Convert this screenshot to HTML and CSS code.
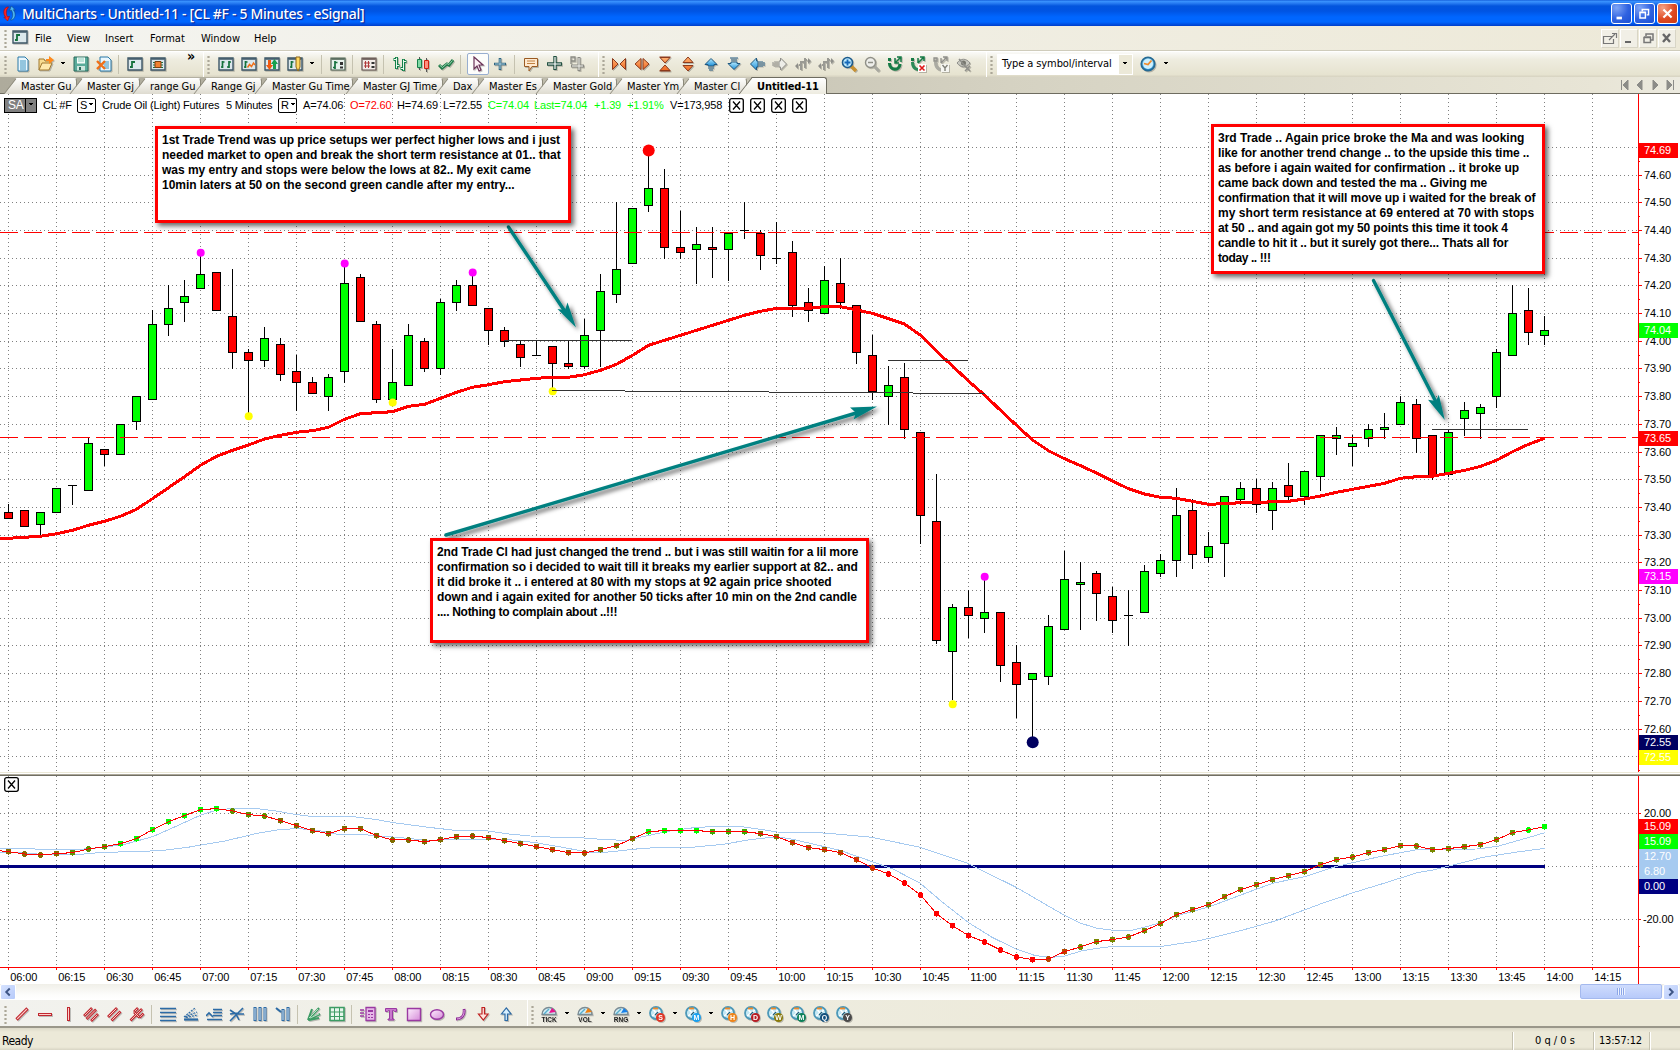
FILE: index.html
```html
<!DOCTYPE html>
<html lang="en">
<head>
<meta charset="utf-8">
<title>MultiCharts - Untitled-11</title>
<link rel="stylesheet" href="styles.css">
</head>
<body>
<svg class="defs" width="0" height="0">
<defs>
<linearGradient id="gb" x1="0" y1="0" x2="0" y2="1"><stop offset="0" stop-color="#b8ecff"/><stop offset="1" stop-color="#1d8fd8"/></linearGradient>
<linearGradient id="go" x1="0" y1="0" x2="0" y2="1"><stop offset="0" stop-color="#ffb070"/><stop offset="1" stop-color="#ee6a24"/></linearGradient>
<linearGradient id="gp" x1="0" y1="0" x2="1" y2="1"><stop offset="0" stop-color="#fdeefd"/><stop offset="1" stop-color="#d58bd8"/></linearGradient>
</defs>
<symbol id="app" viewBox="0 0 16 16"><path d="M6 1C1 2 1 9 4 12L2 12l4 4 2-5-2 .6C4 9 4 4 7 1z" fill="#f22" stroke="#a00" stroke-width=".6"/><path d="M10 15c5-1 5-8 2-11l2 0-4-4-2 5 2-.6c2 3 2 8-1 10.600z" fill="#4db8f4" stroke="#147" stroke-width=".6"/></symbol>
<symbol id="win" viewBox="0 0 16 16"><path d="M1 2h14v12H1z" fill="#dce8ec" stroke="#3c5666" stroke-width="1.400"/><path d="M1.500 3h13" stroke="#3c5666" stroke-width="1.500"/><path d="M5 5v7M5 11H3M5 6h3" stroke="#14713c" stroke-width="1.800" fill="none"/></symbol>
<symbol id="doc" viewBox="0 0 16 16"><path d="M3 1h7l3 3v11H3z" fill="#eaf7fd" stroke="#2878a8"/><path d="M5 5h6M5 7h6M5 9h6M5 11h6M5 13h6" stroke="#3c94c0"/></symbol>
<symbol id="open" viewBox="0 0 16 16"><path d="M1 14V3h5l1 2h5v3" fill="#f8dc90" stroke="#a07830"/><path d="M1 14l3-7h10l-3 7z" fill="#ffe9ac" stroke="#a07830"/><path d="M8 5V3h3V0l5 4-5 4V5z" fill="#ff8a1c"/></symbol>
<symbol id="save" viewBox="0 0 16 16"><path d="M1 1h14v14H1z" fill="#5aab9a" stroke="#2a6a5c"/><path d="M4 1.500h8v6H4z" fill="#f4fbf8"/><path d="M5 3h6M5 5h6" stroke="#8cb"/><path d="M4 10h8v4.500H4z" fill="#cfe6de"/><path d="M6 11h2v3H6z" fill="#2a6a5c"/></symbol>
<symbol id="docx" viewBox="0 0 16 16"><path d="M4 1h8l3 3v11H4z" fill="#eaf7fd" stroke="#2878a8"/><path d="M7 6h6M7 8h6M8 10h5M8 12h5" stroke="#3c94c0"/><path d="M1 5l8 8M9 5l-8 8" stroke="#f07018" stroke-width="2.400"/></symbol>
<symbol id="chip" viewBox="0 0 16 16"><path d="M1 2h14v12H1z" fill="#dce8ec" stroke="#3c5666" stroke-width="1.400"/><path d="M1.500 3h13" stroke="#3c5666" stroke-width="1.500"/><path d="M3 6.500h10M3 9h10M3 11.500h10" stroke="#14713c"/><path d="M5 5.500h6v6H5z" fill="#f08030" stroke="#804010"/></symbol>
<symbol id="win2" viewBox="0 0 16 16"><path d="M1 2h14v12H1z" fill="#dce8ec" stroke="#3c5666" stroke-width="1.400"/><path d="M1.500 3h13" stroke="#3c5666" stroke-width="1.500"/><path d="M4.500 5v7M4.500 11H3M4.500 6h2M11 5v7M11 11H9M11 6h2" stroke="#14713c" stroke-width="1.700" fill="none"/></symbol>
<symbol id="winw" viewBox="0 0 16 16"><path d="M1 2h14v12H1z" fill="#dce8ec" stroke="#3c5666" stroke-width="1.400"/><path d="M1.500 3h13" stroke="#3c5666" stroke-width="1.500"/><path d="M4.500 5v7M4.500 11H3M4.500 6h2" stroke="#14713c" stroke-width="1.700" fill="none"/><path d="M6.500 11.500l2-3 2 2 2-3.500 1.500 2" stroke="#f07018" stroke-width="1.500" fill="none"/></symbol>
<symbol id="wina" viewBox="0 0 16 16"><path d="M1 2h14v12H1z" fill="#dce8ec" stroke="#3c5666" stroke-width="1.400"/><path d="M1.500 3h13" stroke="#3c5666" stroke-width="1.500"/><path d="M4 4h3v5h2l-3.500 5L2 9h2z" fill="#f05a10"/><path d="M9 13h3V8h2l-3.500-5L7 8h2z" fill="#18a050"/></symbol>
<symbol id="winp" viewBox="0 0 16 16"><path d="M1 2h14v12H1z" fill="#dce8ec" stroke="#3c5666" stroke-width="1.400"/><path d="M1.500 3h13" stroke="#3c5666" stroke-width="1.500"/><path d="M4.500 5v7M4.500 11H3M4.500 6h2" stroke="#14713c" stroke-width="1.700" fill="none"/><path d="M9 1h4v10l-2 4-2-4z" fill="#ffd860" stroke="#8a6418"/></symbol>
<symbol id="form" viewBox="0 0 16 16"><path d="M1 2h14v12H1z" fill="#e8f2ec" stroke="#4c6050" stroke-width="1.200"/><path d="M1.500 3h13" stroke="#4c6050" stroke-width="1.600"/><path d="M5 5v8M5 11.500H3M5 6.500h2.500" stroke="#14713c" stroke-width="1.700" fill="none"/><path d="M10 6h3v3h-3zM10 10.500h3v2h-3z" fill="#333"/></symbol>
<symbol id="formr" viewBox="0 0 16 16"><path d="M1 2h14v12H1z" fill="#f2ece8" stroke="#60504c" stroke-width="1.200"/><path d="M1.500 3h13" stroke="#60504c" stroke-width="1.600"/><path d="M3 7h6M3 10h6M4.500 5v7M7.500 5v7" stroke="#b03a3a"/><path d="M10.500 6h3v2h-3zM10.500 10h3v2h-3z" fill="#333"/></symbol>
<symbol id="bars" viewBox="0 0 16 16"><path d="M4.500 1v12M1.500 3.500h3M4.500 9.500h3M11.500 3v12M8.500 12.500h3M11.500 5.500h3" fill="none" stroke="#14804a" stroke-width="3"/><path d="M4.500 1.800v10.400M2 3.500h2M5 9.500h2M11.500 3.800v10.400M9 12.500h2M12 5.500h2" fill="none" stroke="#e4f8ec"/></symbol>
<symbol id="cands" viewBox="0 0 16 16"><path d="M4.500 1v13M11.500 2v14" stroke="#555"/><path d="M2.500 3.500h4v8h-4z" fill="#7fd8a4" stroke="#14804a"/><path d="M9.500 4.500h4v8h-4z" fill="#ff9080" stroke="#d02010"/></symbol>
<symbol id="chk" viewBox="0 0 16 16"><path d="M1 9l3 3 5-4 2 1 4-5" fill="none" stroke="#1f7a48" stroke-width="3"/><path d="M1.500 9l3 2.500 4.500-4 2 1 3.500-4" fill="none" stroke="#a8dcbc" stroke-width=".9"/></symbol>
<symbol id="cur" viewBox="0 0 16 16"><path d="M4 1v12l3-3 2 5 2-1-2-5h4z" fill="#fdf0f6" stroke="#6b3358" stroke-width="1.200"/></symbol>
<symbol id="cross" viewBox="0 0 16 16"><path d="M8 2v12M2 8h12" stroke="#2c6480" stroke-width="2.600"/><path d="M8 3v10M3 8h10" stroke="#c8e4f0" stroke-width=".8"/></symbol>
<symbol id="note" viewBox="0 0 16 16"><path d="M1.500 2.500h13v8H9L6 15v-4.500H1.500z" fill="#ffe9cf" stroke="#9a5a22"/><path d="M4 5h8M4 7.500h8" stroke="#c08040"/></symbol>
<symbol id="cross2" viewBox="0 0 16 16"><path d="M9 0v14M1 8h15" stroke="#205040" stroke-width="3.400"/><path d="M9 1v12M2 8h13" stroke="#fff" stroke-width="1.200"/></symbol>
<symbol id="crossg" viewBox="0 0 16 16"><path d="M10 1v14M2 10h13" stroke="#8a8a84" stroke-width="3"/><path d="M10 2v12M3 10h11" stroke="#f4f4ee"/><path d="M2 8V1h4v4H2" fill="none" stroke="#8a8a84" stroke-width="1.300"/></symbol>
<symbol id="hin" viewBox="0 0 16 16"><path d="M1.500 2.500L7 8l-5.500 5.500zM14.500 2.500L9 8l5.500 5.500z" fill="url(#go)" stroke="#8c3a1c"/></symbol>
<symbol id="hout" viewBox="0 0 16 16"><path d="M7 2.500L1 8l6 5.500zM9 2.500L15 8l-6 5.500z" fill="url(#go)" stroke="#8c3a1c"/></symbol>
<symbol id="vin" viewBox="0 0 16 16"><path d="M3 1.500h10L8 7zM3 14.500h10L8 9z" fill="url(#go)" stroke="#8c3a1c"/><path d="M2.500 1h11M2.500 15h11" stroke="#8c3a1c"/></symbol>
<symbol id="vout" viewBox="0 0 16 16"><path d="M3 6.500h10L8 1zM3 9.500h10L8 15z" fill="url(#go)" stroke="#8c3a1c"/></symbol>
<symbol id="up" viewBox="0 0 16 16"><path d="M2 8.500L8 2.500l6 6h-3v1.500H5V8.500z" fill="url(#gb)" stroke="#205880"/><path d="M5 12h6M6 14h4" stroke="#205880"/></symbol>
<symbol id="dn" viewBox="0 0 16 16"><path d="M2 7.500l6 6 6-6h-3V6H5v1.500z" fill="url(#gb)" stroke="#205880"/><path d="M5 4h6M4 2h8" stroke="#205880"/></symbol>
<symbol id="lf" viewBox="0 0 16 16"><path d="M7.500 2l-6 6 6 6v-3H9V5H7.500z" fill="url(#gb)" stroke="#205880"/><path d="M11 5v6M13 5v6M15 6v4" stroke="#205880"/></symbol>
<symbol id="rt" viewBox="0 0 16 16"><path d="M8.500 2l6 6-6 6v-3H7V5h1.500z" fill="#edede8" stroke="#8f8f8a"/><path d="M5 5v6M3 5v6M1 6v4" stroke="#8f8f8a"/></symbol>
<symbol id="sp" viewBox="0 0 16 16"><path d="M6 5v9M6 9H4M10 2v10M10 4h2M6 6h4" stroke="#9a9a94" stroke-width="2" fill="none"/><path d="M0 10l3-3v6zM16 5l-3-3v6z" fill="#8f8f8a"/></symbol>
<symbol id="zin" viewBox="0 0 16 16"><path d="M10 10l5 5" stroke="#c89030" stroke-width="3.400"/><circle cx="6.500" cy="6.500" r="5" fill="#bdeaff" stroke="#1c5a8c" stroke-width="1.600"/><path d="M6.500 3.500v6M3.500 6.500h6" stroke="#1668b8" stroke-width="1.800"/></symbol>
<symbol id="zout" viewBox="0 0 16 16"><path d="M10 10l5 5" stroke="#a8a8a0" stroke-width="3"/><circle cx="6.500" cy="6.500" r="5" fill="#eeeeea" stroke="#909088" stroke-width="1.400"/><path d="M4 6.500h5" stroke="#909088" stroke-width="1.500"/></symbol>
<symbol id="mag" viewBox="0 0 16 16"><path d="M2.500 7c0 8 10 8 10.500 1" fill="none" stroke="#157a45" stroke-width="3.200"/><path d="M1 2h3v3H1z" fill="#157a45"/><path d="M8 7l6-6M10 1h4v5M8 2v5h4" fill="none" stroke="#157a45" stroke-width="1.500"/></symbol>
<symbol id="magx" viewBox="0 0 16 16"><path d="M2.500 6c0 7 5 8 7 7" fill="none" stroke="#2c8a58" stroke-width="3"/><path d="M1 2h3v3H1z" fill="#157a45"/><path d="M8 7l6-6M10 1h4v4M8 2v5" fill="none" stroke="#157a45" stroke-width="1.500"/><path d="M8 8h8v8H8z" fill="#fff"/><path d="M9.500 9.500l5 5M14.500 9.500l-5 5" stroke="#e01818" stroke-width="1.600"/></symbol>
<symbol id="magy" viewBox="0 0 16 16"><path d="M2.500 6c0 7 5 8 7 7" fill="none" stroke="#aaaaa2" stroke-width="3"/><path d="M1 2h3v3H1zM8 7l6-6M10 1h4v4M8 2v5" fill="none" stroke="#8f8f8a" stroke-width="1.300"/><path d="M8 8h8v8H8z" fill="#f6f6f2"/><path d="M9.500 9l2.500 3 2.500-3M12 12v3" fill="none" stroke="#808078" stroke-width="1.400"/></symbol>
<symbol id="eye" viewBox="0 0 16 16"><path d="M1 7c4-5 9-5 13 0-4 5-9 5-13 0z" fill="#c8c8c0" stroke="#8f8f8a"/><circle cx="7.500" cy="7" r="2.500" fill="#77776f"/><path d="M3 3l8 9M9 10l5 5M14 10l-5 5" stroke="#8f8f8a" stroke-width="1.500"/></symbol>
<symbol id="clk" viewBox="0 0 16 16"><circle cx="8" cy="8" r="6.700" fill="url(#gb)" stroke="#256a94" stroke-width="1.800"/><circle cx="8" cy="8" r="5" fill="#cdf0ff"/><path d="M4 7.500l4 1 3.500-4" stroke="#f08a2a" stroke-width="1.800" fill="none"/></symbol>
<symbol id="l1" viewBox="0 0 16 16"><path d="M2.500 13.500L13.500 2.500" stroke="#c02830" stroke-width="3.200"/><path d="M3.200 12.800L12.800 3.200" stroke="#ffd0cc" stroke-width="1.200"/></symbol>
<symbol id="l2" viewBox="0 0 16 16"><path d="M1 8.500h14" stroke="#c02830" stroke-width="3"/><path d="M2 8.500h12" stroke="#ffd0cc"/></symbol>
<symbol id="l3" viewBox="0 0 16 16"><path d="M8.500 1v14" stroke="#c02830" stroke-width="3"/><path d="M8.500 2v12" stroke="#ffd0cc"/></symbol>
<symbol id="l4" viewBox="0 0 16 16"><path d="M1 10l8-8M3.500 13L13 3.500M8 15l7-7" stroke="#c02830" stroke-width="2.600"/><path d="M1.700 9.300l6.600-6.600M4.200 12.300l8-8M8.700 14.300l5.600-5.600" stroke="#ffd0cc" stroke-width=".9"/></symbol>
<symbol id="l5" viewBox="0 0 16 16"><path d="M2 11l9-9M5.500 14.500l9-9" stroke="#c02830" stroke-width="2.800"/><path d="M2.700 10.300l7.600-7.600M6.200 13.800l7.600-7.600" stroke="#ffd0cc"/></symbol>
<symbol id="l6" viewBox="0 0 16 16"><path d="M1.500 14.500L13 3M5 6l5.500 5.500M5 6l4-4M10.500 11.500l4-4" stroke="#c02830" stroke-width="2.600" fill="none"/><path d="M2.200 13.800L12.300 3.700M5.500 6.500l4.500 4.500M5.700 5.300l2.600-2.600M11.200 10.800l2.600-2.600" stroke="#ffd0cc" stroke-width=".9"/></symbol>
<symbol id="b1" viewBox="0 0 16 16"><path d="M0 2.500h16M0 6.500h16M0 10.500h16M0 14.500h16" stroke="#2c6ba6" stroke-width="1.600"/></symbol>
<symbol id="b2" viewBox="0 0 16 16"><path d="M1 13.500h14" stroke="#2c6ba6" stroke-width="2.200"/><path d="M1 11L12 2M2 11l12-5M3 11.500L15 9" stroke="#2c6ba6" stroke-width="1.200" stroke-dasharray="2 1"/></symbol>
<symbol id="b3" viewBox="0 0 16 16"><path d="M7 3.500h9M7 6.500h9M7 9.500h9" stroke="#2c6ba6" stroke-width="1.500"/><path d="M0 10l3-3 4 4M1 13.500h15" stroke="#2c6ba6" stroke-width="1.600" fill="none"/></symbol>
<symbol id="b4" viewBox="0 0 16 16"><path d="M1 15L14 2M1 4l6 4 3 6M7 8h8M1 8l8-1" stroke="#2c6ba6" stroke-width="1.600" fill="none"/></symbol>
<symbol id="b5" viewBox="0 0 16 16"><path d="M3 1v14M8 1v14M13 1v14" stroke="#2c6ba6" stroke-width="3"/><path d="M3 2v12M8 2v12M13 2v12" stroke="#dcebf8"/></symbol>
<symbol id="b6" viewBox="0 0 16 16"><path d="M8 3v12M13 1v14" stroke="#2c6ba6" stroke-width="3"/><path d="M8 4v10M13 2v12" stroke="#dcebf8"/><path d="M1 2l5 4" stroke="#2c6ba6" stroke-width="2"/></symbol>
<symbol id="g1" viewBox="0 0 16 16"><path d="M2 14L6 3M2 14l11-12M2 14l12-6M3 14l10-2" stroke="#3c9c64" stroke-width="2"/><path d="M3 12l9-9M4 12l9-4" stroke="#d8f2e0" stroke-width=".8"/></symbol>
<symbol id="g2" viewBox="0 0 16 16"><path d="M1 1.500h14v13H1z" fill="#e6f6ec" stroke="#3c9c64" stroke-width="1.600"/><path d="M1 6h14M1 10.500h14M5.500 1v14M10.500 1v14" stroke="#3c9c64"/></symbol>
<symbol id="p1" viewBox="0 0 16 16"><path d="M6 1.500h9v13H6z" fill="#e6b8e8" stroke="#9a3aa2" stroke-width="1.300"/><path d="M8 4h5v2H8zM8 8h2v1H8zM11 8h2v1h-2zM8 11h2v1H8zM11 11h2v1h-2z" fill="#9a3aa2"/><path d="M0 4h4M0 7h4M0 10h4" stroke="#9a3aa2" stroke-width="1.300"/></symbol>
<symbol id="p2" viewBox="0 0 16 16"><path d="M2.500 2.500h11v3h-2l-1-1H9.500v8.500H11v1H5v-1h1.500V4.500h-1l-1 1h-2z" fill="#c878cc" stroke="#9a3aa2"/></symbol>
<symbol id="p3" viewBox="0 0 16 16"><path d="M1.500 2.500h13v12h-13z" fill="url(#gp)" stroke="#9a3aa2" stroke-width="1.400"/></symbol>
<symbol id="p4" viewBox="0 0 16 16"><ellipse cx="8" cy="8.500" rx="6.500" ry="4.800" fill="url(#gp)" stroke="#9a3aa2" stroke-width="1.400"/></symbol>
<symbol id="p5" viewBox="0 0 16 16"><path d="M12 3c1 6-2 10-8 10" fill="none" stroke="#8c2894" stroke-width="2.800"/><path d="M12 4c.5 5-2 8.500-7 9" fill="none" stroke="#e8b0ec"/></symbol>
<symbol id="rd" viewBox="0 0 16 16"><path d="M7 1.500h2.500V8H13l-4.700 6L3.500 8H7z" fill="#ffe4de" stroke="#c02020" stroke-width="1.200"/></symbol>
<symbol id="bu" viewBox="0 0 16 16"><path d="M7 14.500h2.500V8H13L8.300 2 3.500 8H7z" fill="#d8f0ff" stroke="#2c6ba6" stroke-width="1.200"/></symbol>
<symbol id="gauge" viewBox="0 0 16 16"><path d="M1 8.500a7 7 0 0 1 14 0z" fill="#d4eef6" stroke="#7b8c94" stroke-width="1.400"/><path d="M3 8L8 3" stroke="#58aecd" stroke-width="1.500"/></symbol>
<symbol id="clock2" viewBox="0 0 16 16"><circle cx="7" cy="7" r="6" fill="#c4e8f4" stroke="#4c98b8" stroke-width="1.800"/><path d="M4 3l6 8M3 10l8-6" stroke="#fff" stroke-width="1.500"/><path d="M4 2.500h5" stroke="#f08a2a" stroke-width="1.800"/><path d="M9 6L6 9" stroke="#20607c" stroke-width="1.200"/></symbol>
<symbol id="xb" viewBox="0 0 15 15"><rect x=".7" y=".7" width="13.600" height="13.600" rx="2" fill="#fff" stroke="#000" stroke-width="1.300"/><path d="M4 3.500l7 8M11 3.500l-7 8" stroke="#000" stroke-width="1.300"/></symbol>
</svg>

<div class="titlebar">
  <svg class="appicon"><use href="#app"/></svg>
  <span class="title">MultiCharts - Untitled-11 - [CL #F - 5 Minutes - eSignal]</span>
  <span class="wb"><svg viewBox="0 0 21 21"><path d="M5 14h6v3H5z" fill="#fff"/></svg></span>
  <span class="wb"><svg viewBox="0 0 21 21"><path d="M8 8V6h7v6h-2M5.500 9.500h6v6h-6zM5 9h7" fill="none" stroke="#fff" stroke-width="1.600"/></svg></span>
  <span class="wb close"><svg viewBox="0 0 21 21"><path d="M6 6l9 9M15 6l-9 9" stroke="#fff" stroke-width="2.400"/></svg></span>
</div>

<div class="menubar">
  <i class="grip"></i>
  <svg class="ic mi"><use href="#win"/></svg>
  <span style="width:32px">File</span><span style="width:38px">View</span><span style="width:45px">Insert</span><span style="width:51px">Format</span><span style="width:53px">Window</span><span>Help</span>
  <div class="mdi">
    <b><svg viewBox="0 0 16 16"><path d="M10 6.500H1.500v7h10V9M7 10l6-6M10 3.500h4.500V8" fill="none" stroke="#777" stroke-width="1.200"/></svg></b>
    <b><svg viewBox="0 0 16 16"><path d="M4 12h6" stroke="#666" stroke-width="2"/></svg></b>
    <b><svg viewBox="0 0 16 16"><path d="M6 6V4h7v6h-2M4 7.500h6.500v5H4zM4 7h7M6 4h7" fill="none" stroke="#777" stroke-width="1.500"/></svg></b>
    <b><svg viewBox="0 0 16 16"><path d="M4 4l7 8M11 4l-7 8" stroke="#666" stroke-width="2.400"/></svg></b>
  </div>
</div>

<div class="toolbar top">
  <div class="band b-file"><i class="grip"></i>
    <svg class="ic"><use href="#doc"/></svg><svg class="ic"><use href="#open"/></svg><i class="dd"></i><svg class="ic"><use href="#save"/></svg><svg class="ic"><use href="#docx"/></svg><i class="sep"></i><svg class="ic"><use href="#win"/></svg><svg class="ic"><use href="#chip"/></svg><span class="more">»</span>
  </div>
  <div class="band b-chart"><i class="grip"></i>
    <svg class="ic"><use href="#win2"/></svg><svg class="ic"><use href="#winw"/></svg><svg class="ic"><use href="#wina"/></svg><svg class="ic"><use href="#winp"/></svg><i class="dd"></i><i class="sep"></i><svg class="ic"><use href="#form"/></svg><i class="sep"></i><svg class="ic"><use href="#formr"/></svg><i class="sep"></i><svg class="ic"><use href="#bars"/></svg><svg class="ic"><use href="#cands"/></svg><svg class="ic"><use href="#chk"/></svg><i class="sep"></i><span class="sel"><svg class="ic"><use href="#cur"/></svg></span><svg class="ic"><use href="#cross"/></svg><i class="sep"></i><svg class="ic"><use href="#note"/></svg><svg class="ic"><use href="#cross2"/></svg><svg class="ic"><use href="#crossg"/></svg>
  </div>
  <div class="band b-zoom"><i class="grip"></i>
    <svg class="ic"><use href="#hin"/></svg><svg class="ic"><use href="#hout"/></svg><svg class="ic"><use href="#vin"/></svg><svg class="ic"><use href="#vout"/></svg><svg class="ic"><use href="#up"/></svg><svg class="ic"><use href="#dn"/></svg><svg class="ic"><use href="#lf"/></svg><svg class="ic"><use href="#rt"/></svg><svg class="ic"><use href="#sp"/></svg><svg class="ic"><use href="#sp"/></svg><svg class="ic"><use href="#zin"/></svg><svg class="ic"><use href="#zout"/></svg><svg class="ic"><use href="#mag"/></svg><svg class="ic"><use href="#magx"/></svg><svg class="ic"><use href="#magy"/></svg><svg class="ic"><use href="#eye"/></svg>
  </div>
  <div class="band b-symbol"><i class="grip"></i>
    <span class="combo">Type a symbol/interval</span><span class="combobtn"><i class="dd"></i></span><svg class="ic clk"><use href="#clk"/></svg><i class="dd"></i>
  </div>
</div>

<div class="tabs">
  <span class="tab" style="width:66px">Master Gu</span><span class="tab" style="width:63px">Master Gj</span><span class="tab" style="width:61px">range Gu</span><span class="tab" style="width:61px">Range Gj</span><span class="tab" style="width:91px">Master Gu Time</span><span class="tab" style="width:90px">Master GJ Time</span><span class="tab" style="width:36px">Dax</span><span class="tab" style="width:64px">Master Es</span><span class="tab" style="width:74px">Master Gold</span><span class="tab" style="width:67px">Master Ym</span><span class="tab" style="width:63px">Master Cl</span><span class="tab on" style="width:75px">Untitled-11</span>
  <svg class="tabnav" viewBox="0 0 56 12"><path d="M1.500 1v10M8 1v10L3 6zM22 1v10l-5-5zM33 1v10l5-5zM47 1v10l5-5zM53.500 1v10" fill="#8c8c88" stroke="#8c8c88"/></svg>
</div>

<div class="workspace">
  <svg id="chart" width="1680" height="890" viewBox="0 94 1680 890"></svg>
  <div class="quote">
    <span class="sa">SA<b><i class="dd"></i></b></span>
    <span style="width:34px">CL #F</span><span class="box" style="margin-right:6px">S<i class="dd"></i></span><span style="width:124px">Crude Oil (Light) Futures</span><span style="width:52px">5 Minutes</span><span class="box" style="margin-right:6px">R<i class="dd"></i></span><span style="width:47px">A=74.06</span><span class="red" style="width:47px">O=72.60</span><span style="width:46px">H=74.69</span><span style="width:45px">L=72.55</span><span class="green" style="width:46px">C=74.04</span><span class="green" style="width:60px">Last=74.04</span><span class="green" style="width:33px">+1.39</span><span class="green" style="width:43px">+1.91%</span><span style="width:59px">V=173,958</span><svg class="x"><use href="#xb"/></svg><svg class="x"><use href="#xb"/></svg><svg class="x"><use href="#xb"/></svg><svg class="x"><use href="#xb"/></svg>
  </div>
  <svg class="x osc"><use href="#xb"/></svg>
  <div class="note n1"><p>1st Trade Trend was up price setups wer perfect higher lows and i just</p><p>needed market to open and break the short term resistance at 01.. that</p><p>was my entry and stops were below the lows at 82.. My exit came</p><p>10min laters at 50 on the second green candle after my entry...</p></div>
  <div class="note n2"><p>2nd Trade Cl had just changed the trend .. but i was still waitin for a lil more</p><p>confirmation so i decided to wait till it breaks my earlier support at 82.. and</p><p>it did broke it .. i entered at 80 with my stops at 92 again price shooted</p><p>down and i again exited for another 50 ticks after 10 min on the 2nd candle</p><p>.... Nothing to complain about ..!!!</p></div>
  <div class="note n3"><p>3rd Trade .. Again price broke the Ma and was looking</p><p>like for another trend change .. to the upside this time ..</p><p>as before i again waited for confirmation .. it broke up</p><p>came back down and tested the ma .. Giving me</p><p>confirmation that it will move up i waited for the break of</p><p>my short term resistance at 69 entered at 70 with stops</p><p>at 50 .. and again got my 50 points this time it took 4</p><p>candle to hit it .. but it surely got there... Thats all for</p><p>today .. !!!</p></div>
</div>

<div class="scroll">
  <span class="sb"><svg viewBox="0 0 16 16"><path d="M10 4L6 8l4 4" fill="none" stroke="#3d5585" stroke-width="2.200"/></svg></span>
  <span class="thumb"><i></i></span>
  <span class="sb r"><svg viewBox="0 0 16 16"><path d="M6 4l4 4-4 4" fill="none" stroke="#3d5585" stroke-width="2.200"/></svg></span>
</div>

<div class="toolbar bottom">
  <div class="band b-draw"><i class="grip"></i>
    <svg class="ic"><use href="#l1"/></svg><svg class="ic"><use href="#l2"/></svg><svg class="ic"><use href="#l3"/></svg><svg class="ic"><use href="#l4"/></svg><svg class="ic"><use href="#l5"/></svg><svg class="ic"><use href="#l6"/></svg><i class="sep"></i><svg class="ic"><use href="#b1"/></svg><svg class="ic"><use href="#b2"/></svg><svg class="ic"><use href="#b3"/></svg><svg class="ic"><use href="#b4"/></svg><svg class="ic"><use href="#b5"/></svg><svg class="ic"><use href="#b6"/></svg><i class="sep"></i><svg class="ic"><use href="#g1"/></svg><svg class="ic"><use href="#g2"/></svg><i class="sep"></i><svg class="ic"><use href="#p1"/></svg><svg class="ic"><use href="#p2"/></svg><svg class="ic"><use href="#p3"/></svg><svg class="ic"><use href="#p4"/></svg><svg class="ic"><use href="#p5"/></svg><svg class="ic"><use href="#rd"/></svg><svg class="ic"><use href="#bu"/></svg>
  </div>
  <div class="band b-res"><i class="grip"></i>
    <svg class="ic" viewBox="0 0 16 16"><use href="#gauge"/><path d="M8 7l3-5 4 4z" fill="#e8148c"/><text x="8" y="15.500">TICK</text></svg><i class="dd"></i>
    <svg class="ic" viewBox="0 0 16 16"><use href="#gauge"/><path d="M8 7l3-5 4 4z" fill="#f08010"/><text x="8" y="15.500">VOL</text></svg><i class="dd"></i>
    <svg class="ic" viewBox="0 0 16 16"><use href="#gauge"/><path d="M8 7l3-5 4 4z" fill="#1880e8"/><text x="8" y="15.500">RNG</text></svg><i class="dd"></i>
    <svg class="ic m" viewBox="0 0 16 16"><use href="#clock2"/><circle cx="11.500" cy="11.500" r="4.500" fill="#e03424"/><text x="11.500" y="14">S</text></svg><i class="dd"></i>
    <svg class="ic m" viewBox="0 0 16 16"><use href="#clock2"/><circle cx="11.500" cy="11.500" r="4.500" fill="#18a0f0"/><text x="11.500" y="14">M</text></svg><i class="dd"></i>
    <svg class="ic m" viewBox="0 0 16 16"><use href="#clock2"/><circle cx="11.500" cy="11.500" r="4.500" fill="#f08418"/><text x="11.500" y="14">H</text></svg>
    <svg class="ic m" viewBox="0 0 16 16"><use href="#clock2"/><circle cx="11.500" cy="11.500" r="4.500" fill="#b81c24"/><text x="11.500" y="14">D</text></svg>
    <svg class="ic m" viewBox="0 0 16 16"><use href="#clock2"/><circle cx="11.500" cy="11.500" r="4.500" fill="#8a7a08"/><text x="11.500" y="14">W</text></svg>
    <svg class="ic m" viewBox="0 0 16 16"><use href="#clock2"/><circle cx="11.500" cy="11.500" r="4.500" fill="#0c8058"/><text x="11.500" y="14">M</text></svg>
    <svg class="ic m" viewBox="0 0 16 16"><use href="#clock2"/><circle cx="11.500" cy="11.500" r="4.500" fill="#14507c"/><text x="11.500" y="14">Q</text></svg>
    <svg class="ic m" viewBox="0 0 16 16"><use href="#clock2"/><circle cx="11.500" cy="11.500" r="4.500" fill="#4a4a4a"/><text x="11.500" y="14">Y</text></svg>
  </div>
</div>

<div class="status"><span class="ready">Ready</span><span class="rate">0 q / 0 s</span><span class="time">13:57:12</span><span class="end"></span></div>
<script src="chart.js"></script>
</body>
</html>
```
FILE: styles.css
```css
* { box-sizing: border-box; }
body { margin: 0; width: 1680px; height: 1050px; overflow: hidden; display: flex; flex-direction: column; background: #ece9d8; font: 11px "DejaVu Sans Condensed", "DejaVu Sans", sans-serif; color: #000; white-space: nowrap; }
.defs { position: absolute; width: 0; height: 0; }
svg { flex: none; }

.titlebar { height: 26px; flex: none; display: flex; align-items: center; padding: 0 2px 0 2px; background: linear-gradient(#0a4fd0 0, #3c96ff 1px, #2a7ff4 3px, #0355dd 6px, #0054e3 11px, #0066ff 17px, #0066ff 22px, #0048d8 25px, #003dc8 26px); }
.appicon { width: 15px; height: 17px; margin-right: 5px; }
.title { flex: 1; color: #fff; font: 500 14px "Noto Sans", sans-serif; text-shadow: 1px 1px 1px #0a1883; letter-spacing: -0.320px; }
.wb { width: 21px; height: 21px; margin-left: 2px; border: 1px solid #fff; border-radius: 3px; background: radial-gradient(circle at 25% 20%, #7fa5f6, #2f62e0 55%, #1c50d4); }
.wb svg { display: block; width: 19px; height: 19px; }
.close { background: radial-gradient(circle at 25% 20%, #f5a184, #df4a22 55%, #cc3a12); }

.menubar { height: 25px; flex: none; display: flex; align-items: center; background: linear-gradient(90deg, #f4f4f0, #ede9d8); border-bottom: 1px solid #cfccbc; padding: 0 4px 0 4px; }
.grip { width: 3px; height: 19px; flex: none; background: radial-gradient(circle, #aba798 1px, transparent 1.300px) 0 0 / 3px 4px; }
.ic { width: 16px; height: 16px; margin: 0 3.500px; overflow: visible; filter: drop-shadow(1px 1px 0.500px rgba(0,0,0,.22)); }
.menubar .mi { margin: 0 7px 2px 5px; }
.mdi { margin-left: auto; display: flex; gap: 1px; }
.mdi b { width: 18px; height: 19px; border: 1px solid #fff; border-right-color: #d8d5c6; border-bottom-color: #d8d5c6; background: #f1efe6; }
.mdi svg { display: block; width: 16px; height: 16px; }

.toolbar { display: flex; flex: none; background: linear-gradient(#fafaf8, #eeecdf 30%, #e6e3d0 90%, #d6d2c0); }
.band { display: flex; align-items: center; padding-left: 4px; border-left: 1px solid #fff; }
.top { height: 26px; border-top: 1px solid #fff; }
.top .band { padding-bottom: 1px; }
.top .grip { margin-right: 4px; }
.b-file { width: 203px; border-left: 0; }
.b-chart { width: 395px; padding-left: 3px; }
.b-zoom { width: 388px; padding-left: 3px; }
.b-zoom .grip { margin-right: 2px; }
.b-symbol { flex: 1; padding-left: 3px; }
.sep { width: 8px; height: 19px; flex: none; background: linear-gradient(90deg, transparent 3px, #c5c2b0 3px, #c5c2b0 4px, transparent 4px); }
.dd { width: 12px; height: 12px; flex: none; display: inline-block; background: conic-gradient(from -45deg at 50% 65%, #000 90deg, transparent 0) 50% 50% / 6px 4px no-repeat; }
.more { font-size: 14px; font-weight: bold; margin-left: 18px; margin-top: -16px; }
.sel { width: 22px; height: 22px; border: 1px solid #98aed0; border-radius: 2px; background: #fdfdfb; display: flex; align-items: center; justify-content: center; margin: 0 -1px 0 2px; }
.combo { width: 121px; height: 21px; line-height: 20px; background: #fff; padding-left: 5px; letter-spacing: -0.090px; }
.combobtn { width: 15px; height: 21px; border: 1px solid #fff; display: flex; align-items: center; justify-content: center; background: #ece9d8; margin-right: 0; }
.combobtn .dd { margin-left: -2px; }
.clk { margin-left: 7px; }

.tabs { height: 17px; flex: none; display: flex; padding-left: 16px; background: linear-gradient(90deg, #aeab9c, #b9b6a7 25%, #d5d2c2 60%, #e8e5d6 95%, #eceadf); border-bottom: 1px solid #6e6c60; }
.tab { position: relative; flex: none; height: 16px; padding-left: 5px; line-height: 19px; z-index: 0; letter-spacing: -0.050px; }
.tab::before, .tab::after { content: ""; position: absolute; top: 1px; height: 15px; z-index: -1; background: linear-gradient(#fdfdfb, #dedbd0); border-top: 1px solid #fff; }
.tab::before { left: 0; width: 22px; transform-origin: top; transform: skewX(-38deg); border-left: 1px solid #8d8a7c; }
.tab::after { left: 9px; right: 5px; border-right: 1px solid #8d8a7c; border-radius: 0 3px 0 0; }
.on { font-weight: bold; letter-spacing: -0.100px; }
.on::before, .on::after { background: linear-gradient(#fff, #eceade); border-color: #6e6c60; top: 0; height: 17px; }
.on::after { right: 0; }
.tabnav { width: 56px; height: 12px; margin: 2px 4px 0 auto; }

.workspace { height: 890px; flex: none; position: relative; background: #fff; font-family: "Liberation Sans", Arial, sans-serif; }
#chart { display: block; }
#chart text { font: 11px "Liberation Sans", Arial, sans-serif; letter-spacing: -0.100px; }
.quote { position: absolute; left: 4px; top: 3px; height: 16px; display: flex; align-items: center; letter-spacing: -0.150px; }
.quote > span { flex: none; }
.quote > .sa { display: flex; width: 33px; height: 15px; margin-right: 6px; border: 1px solid #000; background: #808080; color: #fff; padding-left: 3px; line-height: 13px; font-size: 12px; }
.sa b { margin-left: auto; border-left: 1px solid #000; width: 11px; display: flex; align-items: center; justify-content: center; }
.box { width: 19px; height: 15px; border: 1px solid #000; border-radius: 2px; background: #fff; padding-left: 2px; display: flex; align-items: center; }
.box .dd { width: 8px; }
.red { color: #f00; }
.green { color: #0f0; }
.x { width: 15px; height: 15px; margin-right: 6px; }
.osc { position: absolute; left: 4px; top: 683px; }
.note { position: absolute; border: 3px solid #f00; background: #fff; font-weight: bold; font-size: 12px; line-height: 15px; padding: 4px; box-shadow: 3px 3px 5px rgba(0,0,0,.6); }
.note p { margin: 0; }
.n1 { left: 155px; top: 32px; width: 416px; height: 97px; letter-spacing: -0.030px; }
.n2 { left: 430px; top: 444px; width: 439px; height: 105px; letter-spacing: -0.075px; }
.n2 p:nth-child(1) { letter-spacing: -0.110px; }
.n2 p:nth-child(5) { letter-spacing: -0.290px; }
.n3 { left: 1211px; top: 30px; width: 334px; height: 150px; letter-spacing: -0.080px; }
.n3 p:nth-child(1) { letter-spacing: 0; }
.n3 p:nth-child(6) { letter-spacing: 0.050px; }
.n3 p:nth-child(7), .n3 p:nth-child(8) { letter-spacing: -0.140px; }
.n3 p:nth-child(9) { letter-spacing: -0.400px; }

.scroll { height: 16px; flex: none; display: flex; background: linear-gradient(#f0efe8, #fdfdfc 70%, #fff); }
.sb { width: 16px; height: 16px; border: 1px solid #fff; border-radius: 2px; background: linear-gradient(135deg, #d6e2fe, #b6cafa); }
.sb svg { display: block; width: 14px; height: 14px; }
.r { margin-right: 1px; }
.thumb { width: 82px; height: 15px; margin: 0 1px 0 auto; border: 1px solid #a4b9ee; border-radius: 2px; background: linear-gradient(#cfdcfd, #b7cafa); display: flex; align-items: center; justify-content: center; }
.thumb i { width: 8px; height: 7px; background: repeating-linear-gradient(90deg, #8ba6e8 0 1px, #eef3ff 1px 2px); }

.bottom { height: 28px; border-bottom: 2px solid #9a978a; background: linear-gradient(90deg, #f2f2ee, #ece9d8 70%); }
.bottom .band { padding-top: 2px; }
.b-draw { width: 527px; border-left: 0; }
.bottom .grip { margin-right: 3px; }
.b-res { padding-left: 3px; }
.b-res .dd { width: 13px; }
.b-res text { font: bold 6.500px "Liberation Sans", sans-serif; text-anchor: middle; fill: #222; }
.b-res .m text { font-size: 7px; fill: #fff; }

.status { height: 22px; flex: none; display: flex; align-items: center; padding: 3px 0 0 2px; background: linear-gradient(#dcd9c8, #ece9d8 4px, #ece9d8 19px, #d8d5c4); }
.ready { flex: 1; font-size: 12px; letter-spacing: -0.500px; }
.status span + span { border-left: 1px solid #c5c2b0; height: 18px; line-height: 18px; box-shadow: inset 1px 0 #fff; }
.rate { width: 81px; padding-left: 22px; }
.time { width: 56px; padding-left: 5px; letter-spacing: -0.200px; }
.end { width: 31px; }
```
FILE: chart.js
```js
const svg = document.getElementById('chart');
const X = i => 8 + 16 * i;
let out = '';
const rect = (x, y, w, h, f) => { out += `<rect x="${x}" y="${y}" width="${w}" height="${h}" fill="${f}"/>`; };
const line = (x1, y1, x2, y2, c, extra = '') => { out += `<line x1="${x1}" y1="${y1}" x2="${x2}" y2="${y2}" stroke="${c}" ${extra}/>`; };
const poly = (pts, c, w) => { out += `<polyline points="${pts}" fill="none" stroke="${c}" stroke-width="${w}"/>`; };

// Grid
const priceY = [147,175,202,230,258,285,313,341,368,396,424,452,479,507,535,562,590,618,645,673,701,729,756];
out += '<g shape-rendering="crispEdges">';
const dots = 'stroke-dasharray="1 3"';
for (let k = 0; k < 34; k++) {
  line(8.5 + 48 * k, 94, 8.5 + 48 * k, 772, '#808080', dots);
  line(8.5 + 48 * k, 776, 8.5 + 48 * k, 967, '#808080', dots);
}
priceY.concat([813, 866, 919]).forEach(y => line(0, y + .5, 1638, y + .5, '#808080', dots));

// Candles: colour, high, body top, body bottom, low
const candles = `R504,512,519,519 R510,510,527,527 G512,512,525,535 G488,488,513,513 D485,485,486,505 G438,443,491,491 R449,449,455,466 G424,424,455,455 G396,396,422,430 G310,324,400,400
G285,308,325,336 G280,296,303,322 G253,274,289,289 R272,272,311,311 R269,316,353,369 R349,352,361,416 G327,338,361,367 R338,344,375,381 R355,371,383,411 R377,382,394,394
G374,377,397,411 G264,283,372,383 R274,277,322,322 R321,324,400,403 G349,382,400,403 G324,335,386,386 R338,341,369,372 G299,302,369,375 G280,285,303,311 R273,285,306,306
R308,308,331,345 R327,330,342,347 R341,344,358,367 D341,355,356,356 R346,346,364,391 R341,363,367,369 G319,335,367,369 G274,291,331,367 G202,269,295,303 G208,208,264,264
G151,188,206,212 R169,188,248,259 R211,247,253,259 G227,244,250,284 R227,247,250,278 G233,233,250,281 D202,230,231,239 R230,233,256,270 D222,258,259,264 R241,252,306,317
R288,302,311,322 G266,280,314,314 R258,283,303,309 R305,305,353,364 R335,355,392,400 G366,385,397,425 R363,377,430,439 R432,432,516,544 R474,521,641,644 G604,607,652,700
R590,607,616,638 G577,612,619,633 R612,612,666,682 R645,662,685,718 G673,673,680,740 G615,626,677,685 G551,579,630,630 G562,582,585,630 R571,573,594,621 R587,596,621,633
D590,615,616,646 G565,571,613,613 G554,560,574,577 G488,515,561,577 R499,510,555,569 G532,546,558,563 G496,496,544,577 G482,488,500,505 R479,488,505,513 G482,488,511,530
R463,485,497,502 G471,471,497,505 G435,435,477,491 G427,435,439,455 G435,443,447,466 G424,429,439,447 G413,427,430,439 G396,402,425,425 R399,404,439,453 R435,435,477,480
G430,432,475,477 G402,410,419,436 G404,407,414,439 G349,352,397,408 G285,313,356,356 R288,310,333,345 G316,330,336,345`.split(/\s+/);
candles.forEach((c, i) => {
  const [h, t, b, l] = c.slice(1).split(',').map(Number);
  if (l > h) rect(X(i), h, 1, l - h, '#000');
  rect(X(i) - 4, t, 9, b - t, '#000');
  if (c[0] !== 'D') rect(X(i) - 3, t + 1, 7, b - t - 2, c[0] === 'G' ? '#0f0' : '#f00');
});
rect(0, 865, 1545, 3, '#000080');

// Price reference lines
line(0, 232.5, 1638, 232.5, '#f00', 'stroke-dasharray="18 6"');
line(0, 437.5, 1638, 437.5, '#f00', 'stroke-dasharray="18 6"');

// Moving average
const ma = [538.3,537.3,536.3,533.7,530.3,525.3,521.3,516.3,509.3,498.7,487.7,476.7,465.3,456.3,450.3,445,439,435.3,432.3,430.7,427.3,419.3,413.7,412.7,411.7,406.3,404.3,398.3,392.3,387.3,384.7,381.7,380,378.3,377.3,377.3,374.7,370.3,364.3,355.3,345.3,340.3,335.3,330.3,325.3,320.3,315.3,311.3,308.3,308.3,308,306.7,306.7,310,313.3,318.7,324,335.3,351.3,366,381,395,410.3,425.3,440,450.7,458.7,465.7,473,481,488.7,494,497.3,498.3,501.3,504.3,503.7,502.7,502.7,501.7,501.3,499,496,492.3,489.3,486.3,483.3,478.3,476.7,476.3,473.3,470.3,466.3,460.3,451.7,444.3,438.3];
poly('0,538.5 ' + ma.map((y, i) => `${X(i) + .5},${y}`).join(' '), '#f00', 3);

// Oscillator bands
const band = (a, b) => a.map(([x, y]) => `${x / 1.8667},${760 + y / 3}`).concat(b.map(([x, y]) => `${840 + x / 1.8667},${760 + y / 3}`)).join(' ');
poly(band([[0,265],[60,266],[75,269],[150,268],[195,262],[235,252],[285,230],[330,198],[375,165],[405,150],[430,146],[480,146],[515,153],[550,163],[580,169],[660,170],[700,178],[735,188],[800,202],[850,211],[910,213],[950,222],[990,228],[1050,233],[1090,234],[1130,239],[1170,241],[1200,230],[1250,213],[1300,202],[1350,199],[1385,200],[1420,208],[1450,216],[1520,217]],
  [[0,223],[60,232],[150,262],[240,311],[330,383],[420,467],[450,490],[480,505],[510,511],[545,511],[570,501],[600,487],[630,467],[690,440],[720,422],[780,386],[810,369],[870,349],[925,320],[960,307],[1010,289],[1050,277],[1080,268],[1190,267],[1230,258],[1280,235],[1316,218]]), '#a6caf0', 1);
poly(band([[0,278],[45,278],[75,283],[150,283],[185,278],[240,275],[300,272],[350,262],[420,243],[480,220],[525,208],[560,206],[600,213],[630,223],[680,224],[740,232],[800,241],[860,238],[950,239],[1000,248],[1050,262],[1100,277],[1130,277],[1200,265],[1240,262],[1290,262],[1350,253],[1400,239],[1450,230],[1480,238]],
  [[0,271],[60,305],[100,328],[150,370],[190,425],[240,488],[285,533],[330,568],[365,587],[395,592],[420,588],[450,573],[480,565],[510,559],[600,559],[660,545],[690,535],[750,511],[810,484],[900,430],[960,397],[1015,370],[1080,337],[1110,329],[1150,313],[1200,292],[1260,277],[1316,265]]), '#a6caf0', 1);

// Oscillator line
const osc = [274,281,284,280,277,266,259,250,235,208,184,166,148,145,152,163,167,181,196,211,220,205,205,226,239,239,244,238,229,227,232,241,250,259,268,277,278,268,256,235,214,211,211,211,214,214,214,220,229,247,262,268,277,298,323,341,368,404,460,496,526,545,569,590,598,596,574,560,544,538,530,511,490,463,448,433,409,388,373,358,346,334,313,298,290,277,268,256,257,268,265,259,253,238,217,209,199].map(v => 760.3 + v / 3);
const tone = i => i < 4 ? '#8a6a00' : i < 7 ? '#5f9000' : i < 14 ? '#00ff00' : i < 17 ? '#5f9000' : i < 33 ? '#806c00' : i < 37 ? '#a05800' : i < 40 ? '#7a7800' : i < 44 ? '#00ff00' : i < 47 ? '#3fa800' : i < 49 ? '#7a7400' : i < 53 ? '#a05800' : i < 55 ? '#c04000' : i < 65 ? '#ff0000' : i < 67 ? '#b84800' : i < 94 ? '#788800' : i < 95 ? '#5f9800' : '#00ff00';
osc.forEach((y, i) => { out += `<circle cx="${X(i) + .5}" cy="${y}" r="3" fill="${tone(i)}"/>`; });
poly('0,850.8 ' + osc.map((y, i) => `${X(i) + .5},${y}`).join(' '), '#f00', 1);
out += `<circle cx="${X(96) + .5}" cy="${osc[96]}" r="3" fill="#0f0"/>`;

// Drawn support and resistance lines
rect(504, 340, 128, 1, '#333'); rect(552, 390, 73, 1, '#333'); rect(625, 391, 144, 1, '#333');
rect(769, 392, 144, 1, '#333'); rect(913, 393, 72, 1, '#333'); rect(888, 360, 80, 1, '#333'); rect(1432, 429, 96, 1, '#333');

// Axes
rect(1638, 94, 1, 678, '#f00'); rect(1638, 776, 1, 208, '#f00'); rect(0, 967, 1680, 1, '#f00');
priceY.forEach(y => { rect(1639, y, 3, 1, '#f00'); rect(1639, y + 14, 1, 1, '#f00'); });
[813, 919].forEach(y => rect(1639, y, 2, 1, '#f00'));
rect(1639, 946, 1, 1, '#f00');
for (let k = 0; k < 34; k++) rect(8 + 48 * k, 968, 1, 2, '#f00');
rect(0, 772, 1680, 1, '#ece9d8'); rect(0, 773, 1680, 1, '#fff'); rect(0, 774, 1680, 1, '#aca899'); rect(0, 775, 1680, 1, '#716f64');
out += '</g>';

// Swing markers
[[12,252.7,'#f0f'],[21,263.5,'#f0f'],[29,272.5,'#f0f'],[61,576.7,'#f0f'],[15,416.3,'#ff0'],[24,402.5,'#ff0'],[34,391.3,'#ff0'],[59,704.3,'#ff0'],[40,150.5,'#f00',6],[64,742.3,'#000060',6]]
  .forEach(([i, y, c, r = 4]) => { out += `<circle cx="${X(i) + .7}" cy="${y}" r="${r}" fill="${c}"/>`; });
rect(552, 390, 6, 1, '#333');

// Labels
const text = (x, y, s, c = '#000') => { out += `<text x="${x}" y="${y}" fill="${c}">${s}</text>`; };
for (let k = 1; k < 22; k++) text(1644, priceY[k] + 4, (74.7 - k * .1).toFixed(2));
text(1644, 817, '20.00'); text(1643, 923, '-20.00');
for (let k = 0; k < 34; k++) {
  const m = 360 + 15 * k;
  text(10.3 + 48 * k, 981, String(Math.floor(m / 60)).padStart(2, '0') + ':' + String(m % 60).padStart(2, '0'));
}
[[143,'74.69','#f00'],[323,'74.04','#0f0'],[431,'73.65','#f00'],[569,'73.15','#f0f'],[735,'72.55','#000060'],[750,'72.55','#ff0'],
 [819,'15.09','#f00'],[834,'15.09','#0f0'],[849,'12.70','#a6caf0'],[864,'6.80','#a6caf0'],[879,'0.00','#000080']]
  .forEach(([y, s, c]) => { rect(1639, y, 39, 15, c); text(1644, y + 11, s, '#fff'); });

// Arrows
out += '<defs><filter id="sh" x="-20%" y="-20%" width="150%" height="150%"><feDropShadow dx="3" dy="3" stdDeviation="2" flood-opacity=".6"/></filter></defs>';
[[508.5,227,564,310,'576,327.5 557.5,309 565,310 567.5,302.500'],[446,535,858,412.5,'877,406.500 850,407.5 856,412.800 853.5,419.500'],[1373.5,280.5,1436,402,'1444.8,420 1428,399.8 1436,401 1438.8,394.8']]
  .forEach(([a, b, c, d, h]) => { out += `<g filter="url(#sh)"><line x1="${a}" y1="${b}" x2="${c}" y2="${d}" stroke="#008080" stroke-width="3.4" stroke-linecap="round"/><polygon points="${h}" fill="#008080"/></g>`; });
svg.innerHTML = out;
```
